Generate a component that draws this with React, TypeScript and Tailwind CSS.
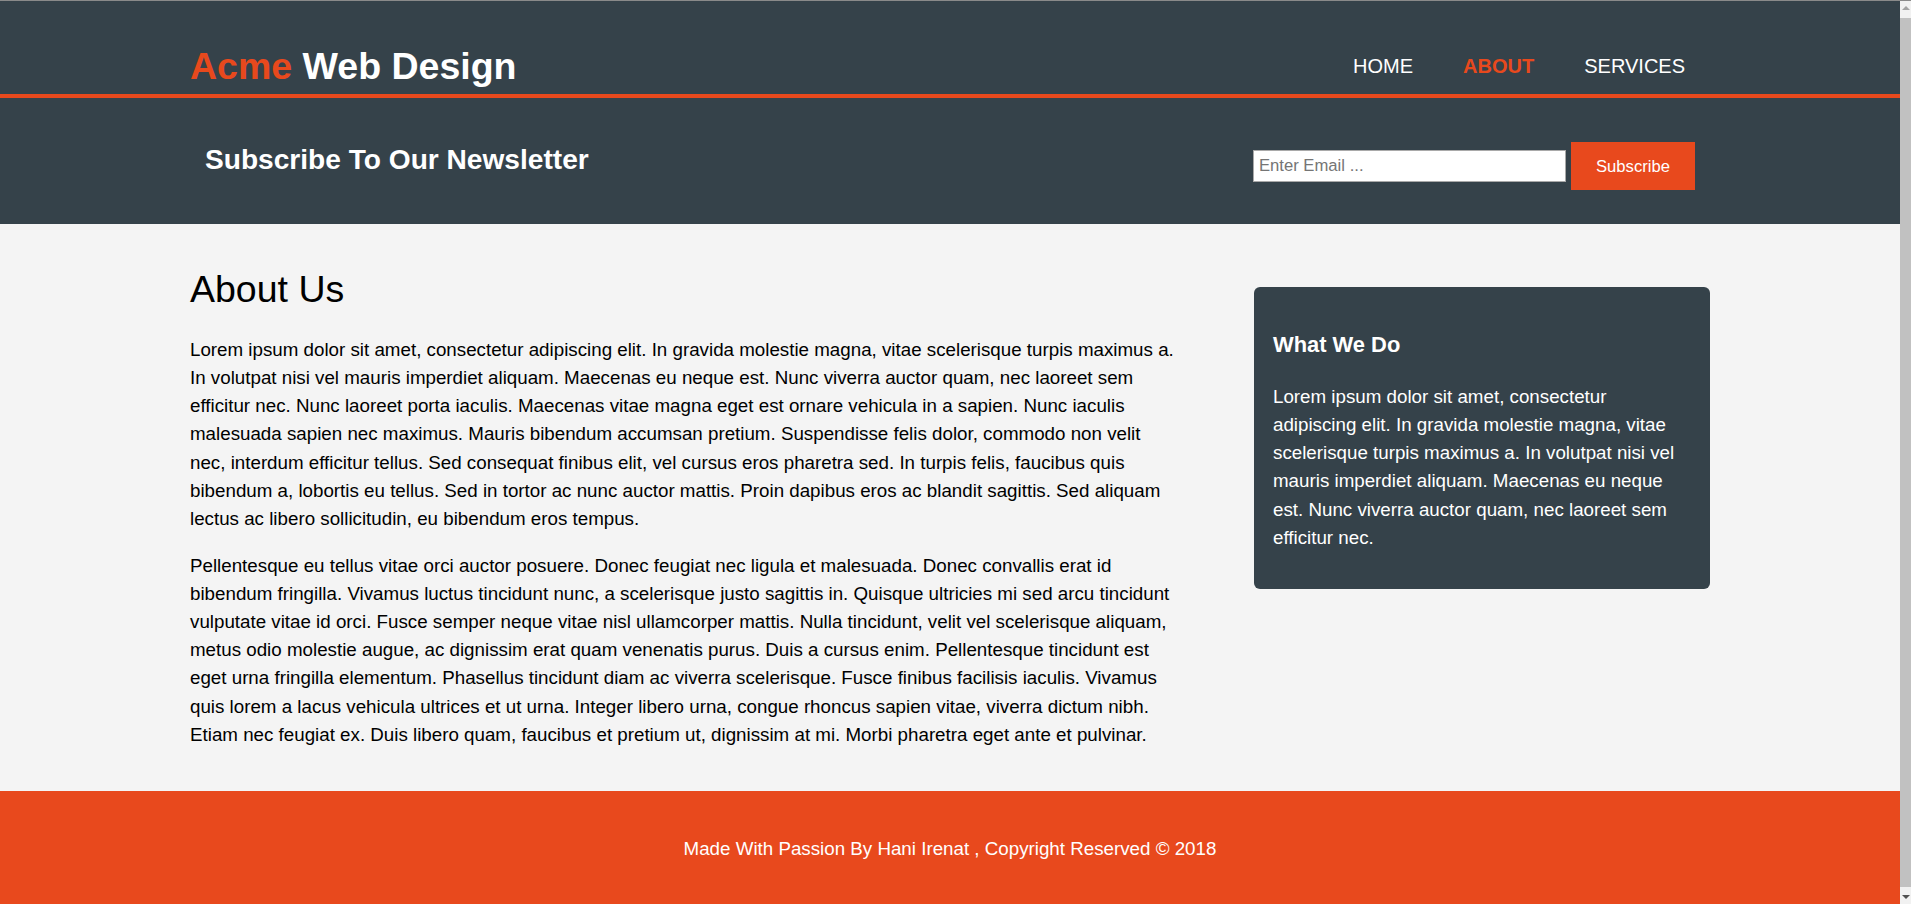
export default function App() {
  const navItems = [
    { label: "Home", current: false },
    { label: "About", current: true },
    { label: "Services", current: false },
  ];

  return (
    <div className="h-screen overflow-hidden flex bg-[#f4f4f4] font-['Liberation_Sans',Arial,Helvetica,sans-serif] text-black">
      <div className="w-[1900px] shrink-0">
        {/* Header */}
        <header className="bg-[#35424a] border-t border-t-[#8a8a8a] border-b-4 border-b-[#e8491d] pt-[37px]">
          <div className="w-[1520px] mx-auto flex justify-between items-start">
            <h1 className="text-[37.5px] leading-[56px] font-bold text-white">
              <span className="text-[#e8491d]">Acme</span> Web Design
            </h1>
            <nav className="mt-[13px]">
              <ul className="flex">
                {navItems.map((item) => (
                  <li key={item.label} className="px-[25px]">
                    <a
                      href="#"
                      className={
                        item.current
                          ? "uppercase text-[20px] leading-[30px] font-bold text-[#e8491d]"
                          : "uppercase text-[20px] leading-[30px] text-white"
                      }
                    >
                      {item.label}
                    </a>
                  </li>
                ))}
              </ul>
            </nav>
          </div>
        </header>

        {/* Newsletter */}
        <section className="bg-[#35424a] h-[126px] text-white">
          <div className="w-[1520px] mx-auto px-[15px] flex justify-between items-start">
            <h2 className="mt-[41px] text-[28.125px] leading-[42px] font-bold">Subscribe To Our Newsletter</h2>
            <form className="mt-[44px] flex items-center gap-[5px]">
              <input
                type="email"
                placeholder="Enter Email ..."
                className="w-[313px] h-[32px] px-[5px] bg-white border border-[#a9a9a9] text-[16.67px] text-black placeholder:text-[#757575] outline-none"
              />
              <button
                type="button"
                className="h-[48px] px-[25px] bg-[#e8491d] text-white text-[16.67px]"
              >
                Subscribe
              </button>
            </form>
          </div>
        </section>

        {/* Main */}
        <section className="w-[1520px] mx-auto flex justify-between items-start pb-[42px]">
          <article className="w-[988px] pt-[37px]">
            <h1 className="text-[37.5px] leading-[56px] font-normal">About Us</h1>
            <p className="mt-[19px] text-[18.75px] leading-[28.125px]">
              Lorem ipsum dolor sit amet, consectetur adipiscing elit. In gravida molestie magna, vitae scelerisque turpis maximus a. In volutpat nisi vel mauris imperdiet aliquam. Maecenas eu neque est. Nunc viverra auctor quam, nec laoreet sem efficitur nec. Nunc laoreet porta iaculis. Maecenas vitae magna eget est ornare vehicula in a sapien. Nunc iaculis malesuada sapien nec maximus. Mauris bibendum accumsan pretium. Suspendisse felis dolor, commodo non velit nec, interdum efficitur tellus. Sed consequat finibus elit, vel cursus eros pharetra sed. In turpis felis, faucibus quis bibendum a, lobortis eu tellus. Sed in tortor ac nunc auctor mattis. Proin dapibus eros ac blandit sagittis. Sed aliquam lectus ac libero sollicitudin, eu bibendum eros tempus.
            </p>
            <p className="mt-[19px] text-[18.75px] leading-[28.125px]">
              Pellentesque eu tellus vitae orci auctor posuere. Donec feugiat nec ligula et malesuada. Donec convallis erat id bibendum fringilla. Vivamus luctus tincidunt nunc, a scelerisque justo sagittis in. Quisque ultricies mi sed arcu tincidunt vulputate vitae id orci. Fusce semper neque vitae nisl ullamcorper mattis. Nulla tincidunt, velit vel scelerisque aliquam, metus odio molestie augue, ac dignissim erat quam venenatis purus. Duis a cursus enim. Pellentesque tincidunt est eget urna fringilla elementum. Phasellus tincidunt diam ac viverra scelerisque. Fusce finibus facilisis iaculis. Vivamus quis lorem a lacus vehicula ultrices et ut urna. Integer libero urna, congue rhoncus sapien vitae, viverra dictum nibh. Etiam nec feugiat ex. Duis libero quam, faucibus et pretium ut, dignissim at mi. Morbi pharetra eget ante et pulvinar.
            </p>
          </article>

          <aside className="w-[456px] mt-[63px] bg-[#35424a] text-white rounded-[6px] px-[19px] pt-[19px] pb-[37px]">
            <h3 className="mt-[22px] text-[21.9px] leading-[33px] font-bold">What We Do</h3>
            <p className="mt-[22px] text-[18.75px] leading-[28.125px]">
              Lorem ipsum dolor sit amet, consectetur adipiscing elit. In gravida molestie magna, vitae scelerisque turpis maximus a. In volutpat nisi vel mauris imperdiet aliquam. Maecenas eu neque est. Nunc viverra auctor quam, nec laoreet sem efficitur nec.
            </p>
          </aside>
        </section>

        {/* Footer */}
        <footer className="bg-[#e8491d] text-white text-center px-[25px] py-[44px]">
          <p className="text-[18.75px] leading-[28.125px]">
            Made With Passion By Hani Irenat , Copyright Reserved © 2018
          </p>
        </footer>
      </div>

      {/* Window scrollbar */}
      <div className="flex-1 flex flex-col items-center bg-[#f1f1f1] border-t border-t-[#8a8a8a]">
        <div className="mt-[5px] w-0 h-0 border-x-[4px] border-x-transparent border-b-[4px] border-b-[#a3a3a3]" />
        <div className="w-full flex-1 my-[8px] bg-[#c1c1c1]" />
        <div className="mb-[5px] w-0 h-0 border-x-[4px] border-x-transparent border-t-[4px] border-t-[#505050]" />
      </div>
    </div>
  );
}
